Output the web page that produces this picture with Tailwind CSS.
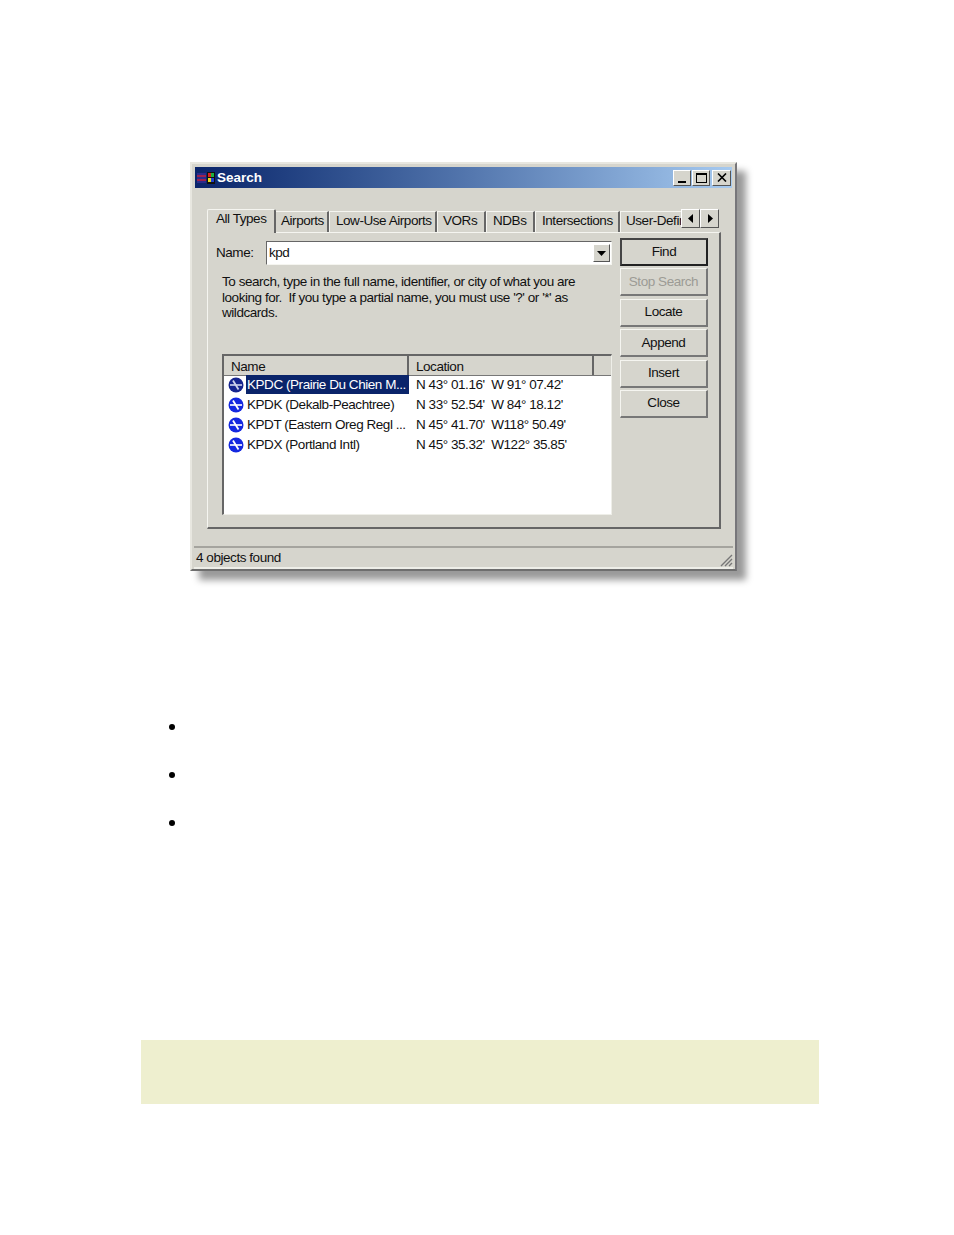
<!DOCTYPE html>
<html lang="en">
<head>
<meta charset="UTF-8" />
<title>Search</title>
<script src="https://cdn.jsdelivr.net/npm/@tailwindcss/browser@4"></script>
</head>
<body class="bg-white font-['Liberation_Sans',sans-serif] text-[13.5px] leading-[16px] text-[#111]">
  <!-- dialog screenshot -->
  <div class="pt-[162px] pl-[190px]">
    <div class="w-[547px] h-[409px] bg-[#d6d5cd] border-t-2 border-l-2 border-r-2 border-b-2 border-t-[#e8e7e0] border-l-[#e8e7e0] border-r-[#77767a] border-b-[#6e6e6e] shadow-[9px_9px_7px_#9a9a9a] pt-[3px] px-[3px] flex flex-col">
      <!-- title bar -->
      <div class="h-[21px] shrink-0 flex items-center bg-gradient-to-r from-[#0a246a] to-[#a6caf0] text-white pl-[1px] pr-[1px]">
        <svg width="20" height="16" viewBox="0 0 20 16">
          <rect x="1" y="3" width="9" height="10" fill="#2b2b8c" />
          <path d="M1 6h9M1 10h9" stroke="#c0203a" stroke-width="1.5" />
          <rect x="11" y="2" width="8" height="12" fill="#111" />
          <rect x="12" y="3" width="3" height="4" fill="#d82020" />
          <rect x="15" y="3" width="3" height="4" fill="#20b040" />
          <rect x="12" y="8" width="3" height="4" fill="#e8e020" />
          <rect x="15" y="8" width="3" height="4" fill="#2040d0" />
        </svg>
        <span class="ml-[1px] font-bold text-[13.5px]">Search</span>
        <div class="ml-auto flex items-center">
          <div class="w-[18px] h-[16px] bg-[#d6d5cd] border border-t-white border-l-white border-r-[#555] border-b-[#555] flex items-end justify-center pb-[2px]"><div class="w-[8px] h-[2px] bg-black"></div></div>
          <div class="ml-[1px] w-[18px] h-[16px] bg-[#d6d5cd] border border-t-white border-l-white border-r-[#555] border-b-[#555] flex items-center justify-center"><div class="w-[11px] h-[10px] border border-t-2 border-black"></div></div>
          <div class="ml-[2px] w-[19px] h-[16px] bg-[#d6d5cd] border border-t-white border-l-white border-r-[#555] border-b-[#555] flex items-center justify-center">
            <svg width="10" height="9" viewBox="0 0 10 9"><path d="M1 0.5l8 8M9 0.5l-8 8" stroke="#000" stroke-width="1.6" /></svg>
          </div>
        </div>
      </div>

      <div class="pl-[12px] pr-[13px] pt-[20px] relative">
        <!-- tabs -->
        <div class="flex items-end h-[24px] tracking-[-0.45px] relative whitespace-nowrap">
          <div class="h-[24px] w-[69px] shrink-0 bg-[#d6d5cd] border-t border-l border-[#f5f5f0] border-r-2 border-r-[#666] rounded-t-[2px] pl-[8px] pt-[1px] relative z-10 -mb-[1px]">All Types</div>
          <div class="h-[21px] shrink-0 w-[53px] border-t border-[#f5f5f0] border-r-2 border-r-[#666] pl-[5px] pt-[1px]">Airports</div>
          <div class="h-[21px] shrink-0 w-[108px] border-t border-l border-[#f5f5f0] border-r-2 border-r-[#666] pl-[6px] pt-[1px]">Low-Use Airports</div>
          <div class="h-[21px] shrink-0 w-[49px] border-t border-l border-[#f5f5f0] border-r-2 border-r-[#666] pl-[5px] pt-[1px]">VORs</div>
          <div class="h-[21px] shrink-0 w-[49px] border-t border-l border-[#f5f5f0] border-r-2 border-r-[#666] pl-[6px] pt-[1px]">NDBs</div>
          <div class="h-[21px] shrink-0 w-[85px] border-t border-l border-[#f5f5f0] border-r-2 border-r-[#666] pl-[6px] pt-[1px]">Intersections</div>
          <div class="h-[21px] w-[62px] shrink-0 border-t border-l border-[#f5f5f0] pl-[5px] pt-[1px] overflow-hidden">User-Defined</div>
          <!-- tab scroll arrows -->
          <div class="absolute right-0 bottom-[4px] flex">
            <div class="w-[19px] h-[19px] bg-[#d6d5cd] border border-t-white border-l-white border-r-[#555] border-b-[#555] flex items-center justify-center"><svg width="6" height="9" viewBox="0 0 6 9"><path d="M5 0v9L0 4.5z" fill="#000" /></svg></div>
            <div class="w-[19px] h-[19px] bg-[#d6d5cd] border border-t-white border-l-white border-r-[#555] border-b-[#555] flex items-center justify-center"><svg width="6" height="9" viewBox="0 0 6 9"><path d="M1 0v9l5-4.5z" fill="#000" /></svg></div>
          </div>
        </div>

        <!-- tab panel -->
        <div class="h-[297px] w-[514px] border-t border-l border-t-[#f5f5f0] border-l-[#f5f5f0] border-r-2 border-b-2 border-r-[#666] border-b-[#666] flex pl-[8px] pt-[5px] tracking-[-0.45px]">
          <div class="w-[396px] shrink-0 pt-[3px]">
            <div class="flex items-center h-[24px]">
              <span class="w-[50px]">Name:</span>
              <div class="w-[346px] h-[24px] bg-white border border-t-[#666] border-l-[#666] border-b-[#f5f5f0] border-r-[#f5f5f0] flex items-center pl-[2px] pr-[1px]">
                <span>kpd</span>
                <div class="ml-auto w-[17px] h-[18px] bg-[#d6d5cd] border border-t-white border-l-white border-r-[#555] border-b-[#555] flex items-center justify-center"><svg width="9" height="5" viewBox="0 0 9 5"><path d="M0 0h9L4.5 5z" fill="#000" /></svg></div>
              </div>
            </div>
            <p class="ml-[6px] mt-[9px] w-[380px] leading-[15.5px]">To search, type in the full name, identifier, or city of what you are looking for.&nbsp; If you type a partial name, you must use '?' or '*' as wildcards.</p>

            <!-- results list -->
            <div class="ml-[6px] mt-[33px] w-[390px] h-[161px] bg-white border-t-2 border-l-2 border-r border-b border-t-[#666] border-l-[#666] border-r-[#eeeee8] border-b-[#eeeee8]">
              <div class="flex h-[20px] bg-[#d6d5cd] border-b border-b-[#777] leading-[21px]">
                <div class="w-[185px] pl-[7px] border-r-2 border-r-[#666]">Name</div>
                <div class="w-[185px] pl-[7px] border-r-2 border-r-[#666]">Location</div>
              </div>
              <div class="flex flex-col -mt-[1px]">
                <div class="flex h-[20px] items-center pl-[4px]">
                  <svg class="shrink-0" width="16" height="16" viewBox="0 0 16 16"><circle cx="8" cy="8" r="7.5" fill="#16258f" /><path d="M2 8h12" stroke="#cfd3ea" stroke-width="1.6" /><path d="M5 3.5l5.5 9" stroke="#cfd3ea" stroke-width="1.8" /></svg>
                  <span class="ml-[2px] w-[163px] h-[19px] leading-[19px] bg-[#0a246a] text-white pl-[1px] whitespace-nowrap">KPDC (Prairie Du Chien M...</span>
                  <span class="ml-[7px] whitespace-pre">N 43° 01.16'  W 91° 07.42'</span>
                </div>
                <div class="flex h-[20px] items-center pl-[4px]">
                  <svg class="shrink-0" width="16" height="16" viewBox="0 0 16 16"><circle cx="8" cy="8" r="7.5" fill="#1428e0" /><path d="M2 8h12" stroke="#fff" stroke-width="1.6" /><path d="M5 3.5l5.5 9" stroke="#fff" stroke-width="1.8" /></svg>
                  <span class="ml-[2px] w-[163px] pl-[1px] whitespace-nowrap">KPDK (Dekalb-Peachtree)</span>
                  <span class="ml-[7px] whitespace-pre">N 33° 52.54'  W 84° 18.12'</span>
                </div>
                <div class="flex h-[20px] items-center pl-[4px]">
                  <svg class="shrink-0" width="16" height="16" viewBox="0 0 16 16"><circle cx="8" cy="8" r="7.5" fill="#1428e0" /><path d="M2 8h12" stroke="#fff" stroke-width="1.6" /><path d="M5 3.5l5.5 9" stroke="#fff" stroke-width="1.8" /></svg>
                  <span class="ml-[2px] w-[163px] pl-[1px] whitespace-nowrap">KPDT (Eastern Oreg Regl ...</span>
                  <span class="ml-[7px] whitespace-pre">N 45° 41.70'  W118° 50.49'</span>
                </div>
                <div class="flex h-[20px] items-center pl-[4px]">
                  <svg class="shrink-0" width="16" height="16" viewBox="0 0 16 16"><circle cx="8" cy="8" r="7.5" fill="#1428e0" /><path d="M2 8h12" stroke="#fff" stroke-width="1.6" /><path d="M5 3.5l5.5 9" stroke="#fff" stroke-width="1.8" /></svg>
                  <span class="ml-[2px] w-[163px] pl-[1px] whitespace-nowrap">KPDX (Portland Intl)</span>
                  <span class="ml-[7px] whitespace-pre">N 45° 35.32'  W122° 35.85'</span>
                </div>
              </div>
            </div>
          </div>

          <!-- buttons -->
          <div class="ml-[8px] w-[88px] flex flex-col gap-[2.4px]">
            <div class="h-[28px] border-2 border-[#222] border-t-[#444] border-l-[#444] flex items-center justify-center">Find</div>
            <div class="h-[28px] border border-t-[#f5f5f0] border-l-[#f5f5f0] border-r-2 border-b-2 border-r-[#777] border-b-[#777] flex items-center justify-center text-[#9c9b95]">Stop Search</div>
            <div class="h-[28px] border border-t-[#f5f5f0] border-l-[#f5f5f0] border-r-2 border-b-2 border-r-[#777] border-b-[#777] flex items-center justify-center">Locate</div>
            <div class="h-[28px] border border-t-[#f5f5f0] border-l-[#f5f5f0] border-r-2 border-b-2 border-r-[#777] border-b-[#777] flex items-center justify-center">Append</div>
            <div class="h-[28px] border border-t-[#f5f5f0] border-l-[#f5f5f0] border-r-2 border-b-2 border-r-[#777] border-b-[#777] flex items-center justify-center">Insert</div>
            <div class="h-[28px] border border-t-[#f5f5f0] border-l-[#f5f5f0] border-r-2 border-b-2 border-r-[#777] border-b-[#777] flex items-center justify-center">Close</div>
          </div>
        </div>
      </div>

      <!-- status bar -->
      <div class="mt-[17px] h-[24px] border-t-2 border-t-[#a5a49e] border-b-2 border-b-[#eeeee8] pl-[2px] pt-[2px] -mx-[1px] flex tracking-[-0.45px] relative">
        <span>4 objects found</span>
        <svg class="absolute right-0 bottom-0" width="15" height="15" viewBox="0 0 15 15"><path d="M14 3L3 14M14 7L7 14M14 11L11 14" stroke="#777" stroke-width="1.4" /></svg>
      </div>
    </div>
  </div>

  <!-- empty bullets -->
  <ul class="mt-[153px] ml-[169px] flex flex-col gap-[42px]">
    <li class="h-[6px] w-[6px] rounded-full bg-black"></li>
    <li class="h-[6px] w-[6px] rounded-full bg-black"></li>
    <li class="h-[6px] w-[6px] rounded-full bg-black"></li>
  </ul>

  <!-- note box -->
  <div class="mt-[214px] ml-[141px] w-[678px] h-[64px] bg-[#eeefcf]"></div>
</body>
</html>
